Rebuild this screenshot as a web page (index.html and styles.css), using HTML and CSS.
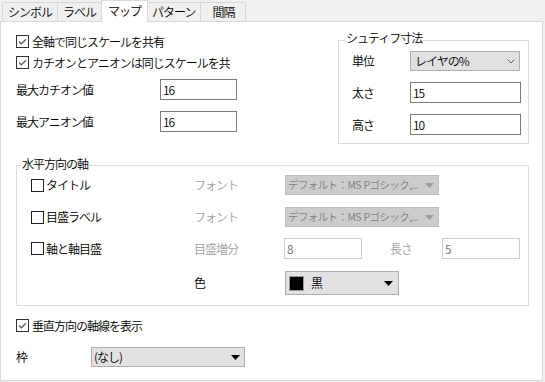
FILE: index.html
```html
<!DOCTYPE html>
<html lang="ja">
<head>
<meta charset="utf-8">
<title>マップ</title>
<link rel="stylesheet" href="styles.css">
</head>
<body>
<div class="tabs">
  <div class="tab first">シンボル</div>
  <div class="tab">ラベル</div>
  <div class="tab active">マップ</div>
  <div class="tab">パターン</div>
  <div class="tab wide">間隔</div>
</div>
<div class="panel">
  <div class="top">
    <div class="left">
      <div class="cb-row">
        <svg class="cb" width="13" height="13" viewBox="0 0 13 13"><rect x="0.5" y="0.5" width="12" height="12" fill="#fff" stroke="#333"/><path d="M3 6.5 L5.3 8.8 L10 4.2" fill="none" stroke="#5a5a5a" stroke-width="1.2"/></svg>
        <span>全軸で同じスケールを共有</span>
      </div>
      <div class="cb-row clip second">
        <svg class="cb" width="13" height="13" viewBox="0 0 13 13"><rect x="0.5" y="0.5" width="12" height="12" fill="#fff" stroke="#333"/><path d="M3 6.5 L5.3 8.8 L10 4.2" fill="none" stroke="#5a5a5a" stroke-width="1.2"/></svg>
        <span>カチオンとアニオンは同じスケールを共有</span>
      </div>
      <div class="field-row first-field">
        <span class="field-label">最大カチオン値</span>
        <span class="input w77">16</span>
      </div>
      <div class="field-row second-field">
        <span class="field-label">最大アニオン値</span>
        <span class="input w77">16</span>
      </div>
    </div>
    <fieldset class="group size">
      <legend class="raised">シュティフ寸法</legend>
      <div class="size-row">
        <span class="size-label">単位</span>
        <span class="combo win w110">
          <span>レイヤの%</span>
          <svg class="chev" width="8" height="5" viewBox="0 0 8 5"><polyline points="0.5,0.5 4,4 7.5,0.5" fill="none" stroke="#606060" stroke-width="1"/></svg>
        </span>
      </div>
      <div class="size-row gap">
        <span class="size-label">太さ</span>
        <span class="input w111">15</span>
      </div>
      <div class="size-row gap">
        <span class="size-label">高さ</span>
        <span class="input w111">10</span>
      </div>
    </fieldset>
  </div>

  <fieldset class="group haxis">
    <legend>水平方向の軸</legend>
    <div class="hrow">
      <div class="hcheck">
        <svg class="cb" width="13" height="13" viewBox="0 0 13 13"><rect x="0.5" y="0.5" width="12" height="12" fill="#fff" stroke="#222"/></svg>
        <span>タイトル</span>
      </div>
      <span class="hlabel disabled">フォント</span>
      <span class="combo dis w154">
        <span class="dis-text">デフォルト：MS Pゴシック,...</span>
        <svg class="tri" width="9" height="5" viewBox="0 0 9 5"><polygon points="0,0 9,0 4.5,5" fill="#9a9a9a"/></svg>
      </span>
    </div>
    <div class="hrow r2">
      <div class="hcheck">
        <svg class="cb" width="13" height="13" viewBox="0 0 13 13"><rect x="0.5" y="0.5" width="12" height="12" fill="#fff" stroke="#222"/></svg>
        <span>目盛ラベル</span>
      </div>
      <span class="hlabel disabled">フォント</span>
      <span class="combo dis w154">
        <span class="dis-text">デフォルト：MS Pゴシック,...</span>
        <svg class="tri" width="9" height="5" viewBox="0 0 9 5"><polygon points="0,0 9,0 4.5,5" fill="#9a9a9a"/></svg>
      </span>
    </div>
    <div class="hrow r3">
      <div class="hcheck">
        <svg class="cb" width="13" height="13" viewBox="0 0 13 13"><rect x="0.5" y="0.5" width="12" height="12" fill="#fff" stroke="#222"/></svg>
        <span>軸と軸目盛</span>
      </div>
      <span class="hlabel disabled">目盛増分</span>
      <span class="input dis-input w78">8</span>
      <span class="hlabel2 disabled">長さ</span>
      <span class="input dis-input w78">5</span>
    </div>
    <div class="hrow r4">
      <div class="hcheck"></div>
      <span class="hlabel">色</span>
      <span class="combo win color w114">
        <span class="swatch"></span>
        <span class="color-name">黒</span>
        <svg class="tri" width="9" height="5" viewBox="0 0 9 5"><polygon points="0,0 9,0 4.5,5" fill="#000"/></svg>
      </span>
    </div>
  </fieldset>

  <div class="cb-row vertical">
    <svg class="cb" width="13" height="13" viewBox="0 0 13 13"><rect x="0.5" y="0.5" width="12" height="12" fill="#fff" stroke="#333"/><path d="M3 6.5 L5.3 8.8 L10 4.2" fill="none" stroke="#5a5a5a" stroke-width="1.2"/></svg>
    <span>垂直方向の軸線を表示</span>
  </div>
  <div class="frame-row">
    <span class="frame-label">枠</span>
    <span class="combo win w154 frame">
      <span>(なし)</span>
      <svg class="tri" width="9" height="5" viewBox="0 0 9 5"><polygon points="0,0 9,0 4.5,5" fill="#000"/></svg>
    </span>
  </div>
</div>
</body>
</html>
```

FILE: styles.css
```css
html, body {
  margin: 0;
  padding: 0;
}
body {
  background: #f0f0f0;
  font-family: "Noto Sans CJK JP", "Noto Sans", sans-serif;
  font-size: 12px;
  font-weight: 350;
  line-height: 14px;
  letter-spacing: -1px;
  color: #000;
  width: 545px;
  height: 382px;
  overflow: hidden;
}

/* tabs */
.tabs {
  display: flex;
  align-items: flex-end;
  height: 21px;
  padding-left: 2px;
}
.tab {
  box-sizing: border-box;
  height: 19px;
  line-height: 18px;
  padding: 0 5px;
  border: 1px solid #d9d9d9;
  border-bottom: none;
  background: #f0f0f0;
  margin-left: -1px;
  white-space: nowrap;
}
.tab.first { margin-left: 0; }
.tab.wide { padding: 0 11px; }
.tab.active {
  position: relative;
  z-index: 1;
  height: 22px;
  line-height: 20px;
  margin-bottom: -1px;
  margin-left: -1px;
  margin-right: -1px;
  padding: 0 6px;
  background: #fff;
}

/* panel */
.panel {
  box-sizing: border-box;
  width: 543px;
  height: 360px;
  background: #fff;
  border: 1px solid #d9d9d9;
  padding: 0 13px 0 15px;
}
.top {
  display: flex;
  align-items: flex-start;
}
.left {
  width: 222px;
  padding-top: 12px;
}
.cb-row {
  display: flex;
  align-items: center;
  gap: 3px;
  height: 15px;
  white-space: nowrap;
}
.cb { flex: none; display: block; }
.cb-row.second { margin-top: 6px; }
.cb-row.clip {
  width: 214px;
  overflow: hidden;
}
.field-row {
  display: flex;
  align-items: center;
  height: 21px;
}
.first-field { margin-top: 9px; }
.second-field { margin-top: 11px; }
.field-label {
  width: 144px;
  flex: none;
}

.input {
  box-sizing: border-box;
  display: flex;
  align-items: center;
  height: 21px;
  border: 1px solid #7a7a7a;
  background: #fff;
  padding-left: 2px;
  flex: none;
}
.w77 { width: 77px; }
.w78 { width: 78px; }
.w110 { width: 110px; }
.w111 { width: 111px; }
.w114 { width: 114px; }
.w154 { width: 154px; }

/* group boxes */
.group {
  margin: 0;
  border: 1px solid #dcdcdc;
  min-width: 0;
  box-sizing: border-box;
}
.group legend {
  padding: 0 1px 2px;
  line-height: 14px;
}
.group legend.raised {
  padding-bottom: 5px;
}
.size {
  width: 191px;
  margin-left: auto;
  margin-top: 9px;
  padding: 1px 0 8px 6px;
}
.size-row {
  display: flex;
  align-items: center;
  height: 20px;
  padding-left: 7px;
}
.size-row.gap {
  height: 21px;
  margin-top: 11px;
}
.size-label {
  width: 58px;
  flex: none;
}

/* combos */
.combo {
  box-sizing: border-box;
  display: flex;
  align-items: center;
  height: 20px;
  flex: none;
  white-space: nowrap;
  overflow: hidden;
}
.combo.win {
  background: #e1e1e1;
  border: 1px solid #adadad;
  padding: 0 4px 0 4px;
}
.combo.win .chev,
.combo .tri {
  margin-left: auto;
  flex: none;
  display: block;
}
.combo.dis {
  background: #cccccc;
  border: 1px solid #bfbfbf;
  padding: 0 4px 0 2px;
  color: #7d7d7d;
  margin-left: 1px;
}
.dis-text {
  font-size: 10.5px;
  letter-spacing: -0.6px;
  word-spacing: 1px;
  overflow: hidden;
}
.combo.color {
  height: 24px;
  margin-left: 1px;
  padding: 0 5px 0 3px;
}
.swatch {
  box-sizing: border-box;
  width: 15px;
  height: 15px;
  background: #000;
  border: 1px solid #9a9a9a;
  flex: none;
}
.color-name {
  margin-left: 7px;
}

/* horizontal axis */
.haxis {
  margin-top: 13px;
  width: 513px;
  padding: 1px 0 10px 4px;
}
.hrow {
  display: flex;
  align-items: center;
  height: 22px;
  padding-left: 10px;
}
.hrow.r2 { margin-top: 10px; }
.hrow.r3 { margin-top: 10px; height: 21px; }
.hrow.r4 { margin-top: 12px; height: 24px; }
.hcheck {
  width: 163px;
  flex: none;
  display: flex;
  align-items: center;
  gap: 2px;
  white-space: nowrap;
}
.hlabel {
  width: 90px;
  flex: none;
}
.hlabel2 {
  width: 52px;
  margin-left: 28px;
  flex: none;
}
.disabled { color: #a0a0a0; }
.dis-input {
  border-color: #cccccc;
  color: #6d6d6d;
}

/* bottom */
.cb-row.vertical { margin-top: 12px; }
.frame-row {
  display: flex;
  align-items: center;
  height: 20px;
  margin-top: 14px;
}
.frame-label {
  width: 75px;
  flex: none;
}
.combo.frame {
  padding: 0 4px 0 2px;
}
```
